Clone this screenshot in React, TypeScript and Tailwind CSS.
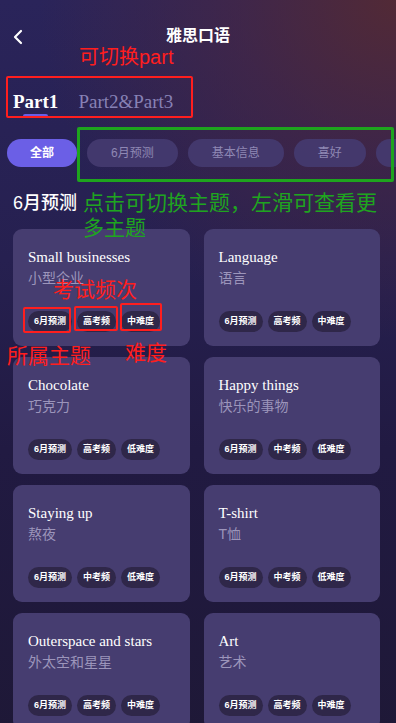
import { ChevronLeft } from "lucide-react";

type Topic = { en: string; zh: string; tags: string[] };

const topics: Topic[] = [
  { en: "Small businesses", zh: "小型企业", tags: ["6月预测", "高考频", "中难度"] },
  { en: "Language", zh: "语言", tags: ["6月预测", "高考频", "中难度"] },
  { en: "Chocolate", zh: "巧克力", tags: ["6月预测", "高考频", "低难度"] },
  { en: "Happy things", zh: "快乐的事物", tags: ["6月预测", "中考频", "低难度"] },
  { en: "Staying up", zh: "熬夜", tags: ["6月预测", "中考频", "低难度"] },
  { en: "T-shirt", zh: "T恤", tags: ["6月预测", "中考频", "低难度"] },
  { en: "Outerspace and stars", zh: "外太空和星星", tags: ["6月预测", "高考频", "中难度"] },
  { en: "Art", zh: "艺术", tags: ["6月预测", "高考频", "中难度"] },
];

const chips = ["全部", "6月预测", "基本信息", "喜好", "日常"];

const serif = "font-['Liberation_Serif','Noto_Sans_CJK_SC',serif]";
const sans = "font-['Liberation_Sans','Noto_Sans_CJK_SC',sans-serif]";

const TopicCard = ({ topic }: { topic: Topic }) => (
  <div className="flex h-[117px] flex-col rounded-[9px] bg-[#463d70] px-[15px] pt-[18px] pb-[14px]">
    <div className={`${serif} text-[15px] leading-[20px] text-white`}>{topic.en}</div>
    <div className={`${sans} mt-[1px] text-[14px] leading-[20px] text-[#9c95bb]`}>{topic.zh}</div>
    <div className="mt-auto flex gap-[5px]">
      {topic.tags.map((tag) => (
        <span
          key={tag}
          className={`${sans} flex h-[21px] items-center rounded-full bg-[#2f2749] px-[6px] text-[9px] font-bold text-white`}
        >
          {tag}
        </span>
      ))}
    </div>
  </div>
);

export default function App() {
  return (
    <div
      className={`${sans} relative min-h-screen w-[396px] overflow-hidden bg-[#1f1839] bg-[radial-gradient(90%_45%_at_100%_0%,rgba(84,42,52,0.95)_0%,rgba(80,40,62,0.55)_45%,rgba(80,40,62,0)_100%),linear-gradient(180deg,#2a245a_0px,#262050_260px,#211a42_450px,#1e1836_100%)] pb-6`}
    >
      {/* header */}
      <div className="relative flex h-[72px] items-center justify-center">
        <ChevronLeft className="absolute left-[6px] top-[25px] h-[24px] w-[24px] text-white" strokeWidth={2.2} />
        <h1 className="text-[16px] font-bold text-white">雅思口语</h1>
      </div>

      {/* part tabs */}
      <div className="flex gap-[20px] pl-[13px] pt-[18px]">
        <div className="flex flex-col items-center">
          <span className={`${serif} text-[19px] font-bold leading-[24px] text-white`}>Part1</span>
          <span className="h-[4px] w-[25px] rounded-full bg-[#6a5ee6]" />
        </div>
        <span className={`${serif} text-[19px] leading-[24px] text-[#8781b5]`}>Part2&amp;Part3</span>
      </div>

      {/* theme chips */}
      <div className="mt-[21px] flex gap-[10px] overflow-hidden pl-[7px]">
        {chips.map((c, i) => (
          <span
            key={c}
            className={
              i === 0
                ? "flex h-[28px] shrink-0 items-center rounded-full bg-[#6b5fe6] px-[23px] text-[12px] font-bold text-white"
                : "flex h-[28px] shrink-0 items-center rounded-full bg-[#453b70]/90 px-[24px] text-[12px] text-[#8f88b4]"
            }
          >
            {c}
          </span>
        ))}
      </div>

      <h2 className="mt-[23px] pl-[13px] text-[18px] font-medium leading-[26px] text-white">6月预测</h2>

      <div className="mt-[13px] grid grid-cols-2 gap-x-[14px] gap-y-[11px] pl-[13px] pr-[16px]">
        {topics.map((t) => (
          <TopicCard key={t.en} topic={t} />
        ))}
      </div>

      {/* annotation overlays */}
      <div className="pointer-events-none absolute left-[79px] top-[45px] text-[20px] leading-[24px] text-[#ff1e1e]">可切换part</div>
      <div className="pointer-events-none absolute left-[6px] top-[76px] h-[42px] w-[187px] rounded-[2px] border-2 border-[#ff1e1e]" />
      <div className="pointer-events-none absolute left-[77px] top-[127px] h-[55px] w-[317px] rounded-[2px] border-[3px] border-[#1ea41e]" />
      <div className="pointer-events-none absolute left-[83px] top-[190px] w-[300px] text-[21px] leading-[25px] text-[#1fa51f]">
        点击可切换主题，左滑可查看更多主题
      </div>
      <div className="pointer-events-none absolute left-[53px] top-[277px] text-[21px] leading-[26px] text-[#ff1e1e]">考试频次</div>
      <div className="pointer-events-none absolute left-[23px] top-[307px] h-[26px] w-[48px] rounded-[2px] border-2 border-[#ff1e1e]" />
      <div className="pointer-events-none absolute left-[74px] top-[306px] h-[25px] w-[44px] rounded-[2px] border-2 border-[#ff1e1e]" />
      <div className="pointer-events-none absolute left-[120px] top-[303px] h-[28px] w-[42px] rounded-[2px] border-2 border-[#ff1e1e]" />
      <div className="pointer-events-none absolute left-[7px] top-[343px] text-[21px] leading-[26px] text-[#ff1e1e]">所属主题</div>
      <div className="pointer-events-none absolute left-[125px] top-[340px] text-[21px] leading-[26px] text-[#ff1e1e]">难度</div>
    </div>
  );
}
